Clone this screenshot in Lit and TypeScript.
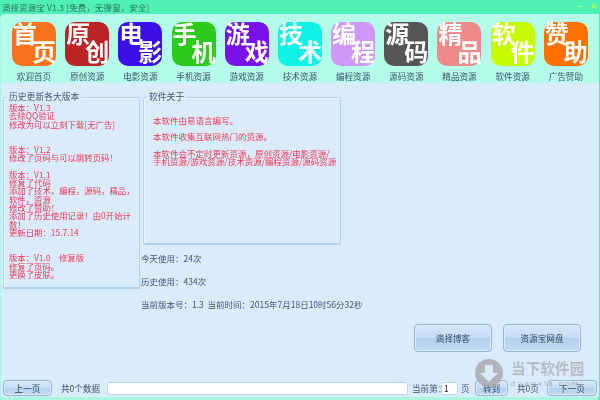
import { LitElement, html, css } from "lit";
import { customElement } from "lit/decorators.js";

const TOOLS: [string, string, string, string][] = [
  ["首", "页", "#f8731c", "欢迎首页"],
  ["原", "创", "#b92424", "原创资源"],
  ["电", "影", "#3a0ee6", "电影资源"],
  ["手", "机", "#2ecb1c", "手机资源"],
  ["游", "戏", "#7a12e8", "游戏资源"],
  ["技", "术", "#10f2e6", "技术资源"],
  ["编", "程", "#cf98f6", "编程资源"],
  ["源", "码", "#555555", "源码资源"],
  ["精", "品", "#ee8a8a", "精品资源"],
  ["软", "件", "#c6fb02", "软件资源"],
  ["赞", "助", "#ff7100", "广告赞助"],
];

const HISTORY = [
  "版本：V1.3", "去除QQ验证", "修改为可以立刻下载[无广告]", "", "",
  "版本：V1.2", "修改了页码与可以跳转页码！", "",
  "版本：V1.1", "修复了代码", "添加了技术，编程，源码，精品，", "软件，资源", "修改了赞助！",
  "添加了历史使用记录！由0开始计", "数！", "更新日期：15.7.14", "", "",
  "版本：V1.0　修复版", "修复了页码。", "更换了皮肤。",
];

@customElement("app-root")
export class AppRoot extends LitElement {
  static styles = css`
    :host {
      display: block;
      width: 600px;
      height: 400px;
      overflow: hidden;
      font-family: "Noto Sans CJK SC", "Liberation Sans", sans-serif;
      font-size: 8.6px;
      color: #44566a;
    }
    .win {
      position: relative;
      width: 600px;
      height: 400px;
      background: #4ff0b5;
      display: flex;
      flex-direction: column;
      filter: blur(0.25px);
    }
    .title {
      height: 14px;
      flex: none;
      display: flex;
      align-items: center;
      padding: 0 3px 1px 2px;
      box-sizing: border-box;
      color: #2f6f5c;
      font-size: 8.4px;
      letter-spacing: 0.2px;
    }
    .title .t { flex: 1; }
    .title .c { color: #d4f53a; font-size: 10px; line-height: 12px; margin-left: 8px; font-family: "Liberation Sans", sans-serif; }
    .main {
      flex: 1;
      margin: 0 1px 3px 1px;
      background: #d9ebfd;
      display: flex;
      flex-direction: column;
      min-height: 0;
      box-shadow: -1px 3px 0 #a9f7e0;
    }
    .tools {
      flex: none;
      height: 69px;
      background: #b5fbe9;
      display: grid;
      grid-template-columns: repeat(11, 53.2px);
      padding: 8px 0 0 6.4px;
      box-sizing: border-box;
    }
    .tool { display: flex; flex-direction: column; align-items: center; }
    .icon {
      width: 44px;
      height: 44px;
      border-radius: 10px;
      display: grid;
      color: #fff;
      font-weight: 700;
      font-size: 24px;
      line-height: 24px;
      font-family: "Noto Sans CJK SC", sans-serif;
    }
    .icon span { grid-area: 1 / 1; }
    .icon .a { justify-self: start; align-self: start; margin: -1px 0 0 1px; }
    .icon .b { justify-self: end; align-self: end; margin: 0 0 3px 0; }
    .lab { margin-top: 3px; line-height: 14px; white-space: nowrap; color: #3f5468; }
    .body {
      flex: 1;
      min-height: 0;
      display: flex;
      gap: 3px;
      padding: 9px 0 0 2px;
      box-sizing: border-box;
    }
    fieldset {
      margin: 0;
      padding: 0;
      border: 1px solid #aed2f3;
      border-bottom-width: 2px;
      border-radius: 2px;
      box-shadow: inset 1px 1px 0 #eef6ff;
      min-width: 0;
      box-sizing: border-box;
    }
    legend {
      margin-left: 3px;
      padding: 0 2px;
      line-height: 10px;
      color: #44566a;
      font-size: 8.8px;
    }
    .hist { width: 137px; height: 197px; flex: none; }
    .hist .txt {
      padding: 1px 0 0 5px;
      color: #f23a4e;
      font-size: 8.4px;
      line-height: 8.35px;
      white-space: pre;
    }
    .hist .ln { height: 8.35px; }
    .right { flex: 1; min-width: 0; display: flex; flex-direction: column; }
    .about { width: 198px; height: 153px; flex: none; }
    .about .txt { padding: 14px 0 0 9px; color: #f23a4e; font-size: 8.5px; line-height: 8.4px; white-space: nowrap; }
    .about p { margin: 0 0 8px; }
    .stats { margin: 8px 0 0 -2px; line-height: 10px; font-size: 8.5px; color: #44566a; }
    .stats div { margin-bottom: 13px; white-space: nowrap; }
    .btns { display: flex; gap: 11px; justify-content: flex-end; padding: 2px 18px 0 0; }
    .btn {
      border: 1px solid #93b5d8;
      border-radius: 4px;
      background: linear-gradient(#d6e8fb, #c4dbf4 50%, #b4d0ee 52%, #c3dcf6);
      box-shadow: inset 0 0 0 1px #dcecfc;
      display: flex;
      align-items: center;
      justify-content: center;
      box-sizing: border-box;
      color: #34495c;
      white-space: nowrap;
    }
    .btns .btn { width: 78px; height: 28px; }
    .foot {
      flex: none;
      height: 16px;
      margin-bottom: 1px;
      display: flex;
      align-items: center;
      padding-left: 2px;
      white-space: nowrap;
    }
    .foot .btn { height: 16px; }
    .inp {
      height: 13px;
      background: #fff;
      border: 1px solid #b9d6f3;
      border-radius: 2px;
      box-sizing: border-box;
    }
    .wm {
      position: absolute;
      left: 475px;
      top: 359px;
      display: flex;
      gap: 8px;
      opacity: 0.8;
      pointer-events: none;
    }
    .wm svg { display: block; }
    .wm .cn { font-size: 14.5px; line-height: 17px; font-weight: 700; color: #b0b0b0; letter-spacing: 0.2px; }
    .wm .en { font-family: "Liberation Sans", sans-serif; font-size: 8px; line-height: 9px; color: #9a9a9a; letter-spacing: 2px; margin-top: 3px; }
  `;

  render() {
    return html`
      <div class="win">
        <div class="title">
          <span class="t">滴择资源宝 V1.3 [免费，无弹窗，安全]</span>
          <span class="c">−</span><span class="c">×</span>
        </div>
        <div class="main">
          <div class="tools">
            ${TOOLS.map(
              ([a, b, c, l]) => html`
                <div class="tool">
                  <div class="icon" style="background:${c}"><span class="a">${a}</span><span class="b">${b}</span></div>
                  <div class="lab">${l}</div>
                </div>
              `
            )}
          </div>
          <div class="body">
            <fieldset class="hist">
              <legend>历史更新各大版本</legend>
              <div class="txt">${HISTORY.map((l) => html`<div class="ln">${l}</div>`)}</div>
            </fieldset>
            <div class="right">
              <fieldset class="about">
                <legend>软件关于</legend>
                <div class="txt">
                  <p>本软件由易语言编写。</p>
                  <p>本软件收集互联网热门的资源。</p>
                  <p>本软件会不定时更新资源，原创资源/电影资源/<br />手机资源/游戏资源/技术资源/编程资源/源码资源</p>
                </div>
              </fieldset>
              <div class="stats">
                <div>今天使用：24次</div>
                <div>历史使用：434次</div>
                <div>当前版本号：1.3&nbsp; 当前时间：2015年7月18日10时56分32秒</div>
              </div>
              <div class="btns">
                <div class="btn">滴择博客</div>
                <div class="btn">资源宝网盘</div>
              </div>
            </div>
          </div>
          <div class="foot">
            <div class="btn" style="width:49px">上一页</div>
            <span style="margin-left:9px;width:46px">共0个数据</span>
            <div class="inp" style="width:301px"></div>
            <span style="margin-left:4px;width:29px">当前第：</span>
            <div class="inp" style="width:17px;color:#222;line-height:11px;padding-left:2px">1</div>
            <span style="margin-left:3px;width:14px">页</span>
            <div class="btn" style="width:33px">转到</div>
            <span style="margin-left:9px;width:30px">共0页</span>
            <div class="btn" style="width:50px">下一页</div>
          </div>
        </div>
        <div class="wm">
          <svg width="28" height="28" viewBox="0 0 28 28">
            <circle cx="14" cy="14" r="14" fill="#a8a8a8" />
            <path d="M10 6h8v8h5l-9 9-9-9h5z" fill="#d9ebfd" />
          </svg>
          <div>
            <div class="cn">当下软件园</div>
            <div class="en">downxia.com</div>
          </div>
        </div>
      </div>
    `;
  }
}
